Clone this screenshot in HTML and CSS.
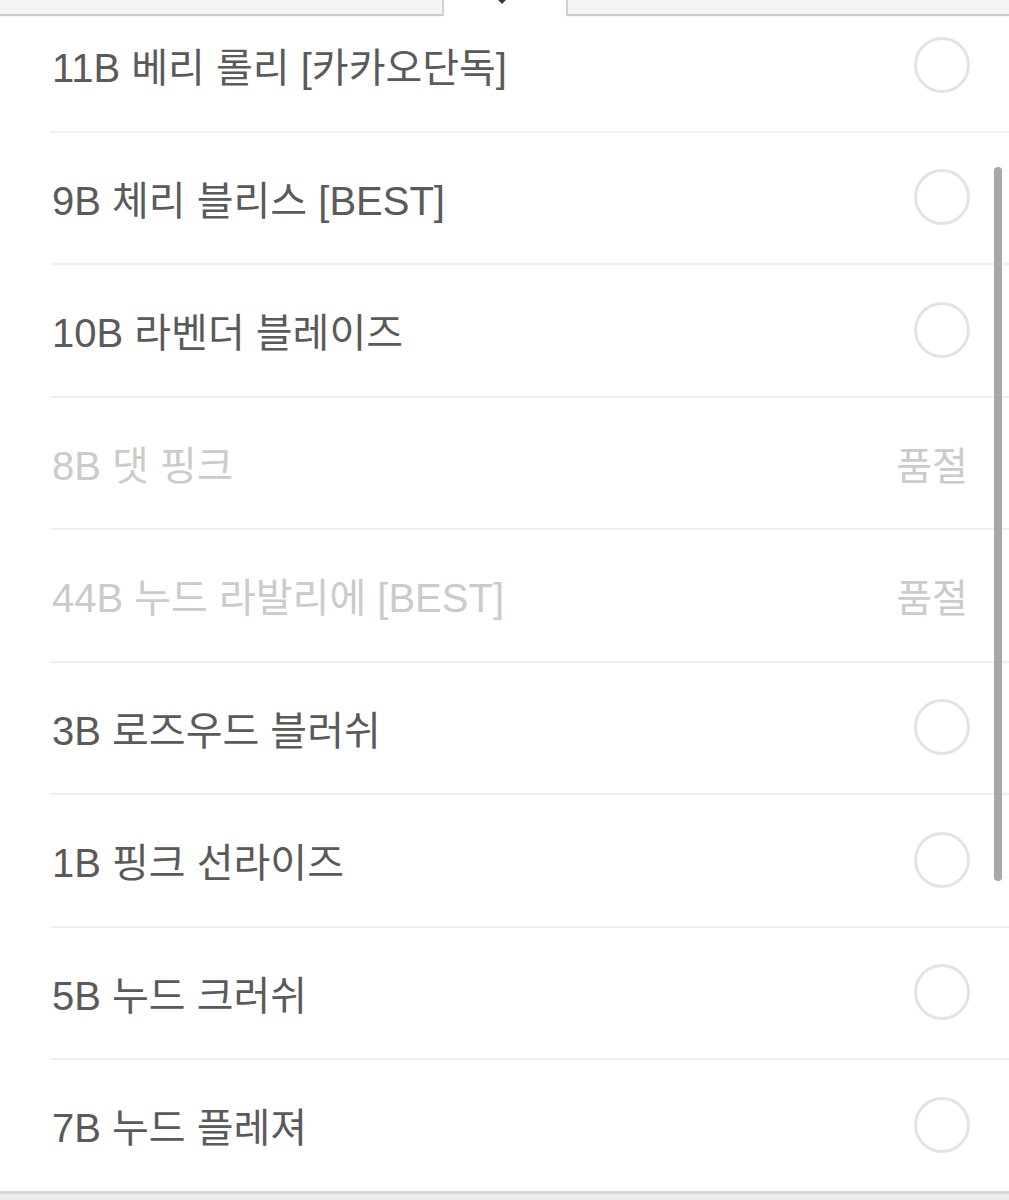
FILE: index.html
```html
<!DOCTYPE html>
<html lang="ko">
<head>
<meta charset="utf-8">
<link rel="stylesheet" href="styles.css">
</head>
<body>
<div class="page">
  <div class="tabs">
    <div class="tab-side tab-left"></div>
    <div class="tab-active"><span class="caret"></span></div>
    <div class="tab-side tab-right"></div>
  </div>
  <ul class="options">
    <li class="option"><span class="label">11B 베리 롤리 [카카오단독]</span><span class="radio"></span></li>
    <li class="option"><span class="label">9B 체리 블리스 [BEST]</span><span class="radio"></span></li>
    <li class="option"><span class="label">10B 라벤더 블레이즈</span><span class="radio"></span></li>
    <li class="option soldout"><span class="label">8B 댓 핑크</span><span class="status">품절</span></li>
    <li class="option soldout"><span class="label">44B 누드 라발리에 [BEST]</span><span class="status">품절</span></li>
    <li class="option"><span class="label">3B 로즈우드 블러쉬</span><span class="radio"></span></li>
    <li class="option"><span class="label">1B 핑크 선라이즈</span><span class="radio"></span></li>
    <li class="option"><span class="label">5B 누드 크러쉬</span><span class="radio"></span></li>
    <li class="option"><span class="label">7B 누드 플레져</span><span class="radio"></span></li>
  </ul>
  <div class="scrollbar"></div>
</div>
</body>
</html>
```

FILE: styles.css
```css
* { box-sizing: border-box; }
html, body {
  margin: 0;
  padding: 0;
  background: #ececec;
}
body {
  font-family: "Liberation Sans", "Noto Sans CJK KR", sans-serif;
  width: 1009px;
  height: 1200px;
  overflow: hidden;
}
.page {
  position: relative;
  width: 1009px;
}
.tabs {
  position: absolute;
  top: 0;
  left: 0;
  right: 0;
  height: 17px;
  display: flex;
  z-index: 2;
}
.tab-side {
  background: #f4f4f4;
  border-bottom: 2px solid #cbcbcb;
  height: 16px;
  box-shadow: 0 1px 2px rgba(0,0,0,0.04);
}
.tab-left {
  width: 444px;
  border-right: 2px solid #d2d2d2;
}
.tab-right {
  flex: 1;
  border-left: 2px solid #d2d2d2;
}
.tab-active {
  width: 122px;
  display: flex;
  justify-content: center;
  padding-right: 6px;
}
.caret {
  display: block;
  width: 0;
  height: 0;
  border-left: 4px solid transparent;
  border-right: 4px solid transparent;
  border-top: 4px solid #3a3a3a;
}
.options {
  list-style: none;
  margin: 0;
  padding: 0;
  background: #fff;
  border-bottom: 3px solid #d7d7d7;
}
.option {
  height: 132.5px;
  margin-left: 50px;
  padding: 0 39px 0 2px;
  display: flex;
  align-items: center;
  justify-content: space-between;
  border-bottom: 2px solid #efefef;
}
.option:last-child {
  border-bottom: none;
  height: 130.5px;
}
.label {
  font-size: 40px;
  color: #5a5a5a;
  white-space: nowrap;
}
.soldout .label {
  color: #cbcbcb;
}
.status {
  font-size: 39px;
  color: #cbcbcb;
  margin-right: 2px;
}
.radio {
  width: 56px;
  height: 56px;
  border: 3px solid #e3e3e3;
  border-radius: 50%;
  margin-top: -1px;
}
.scrollbar {
  position: absolute;
  left: 994px;
  top: 167px;
  width: 8px;
  height: 714px;
  background: #a8a8a8;
  border-radius: 4px;
}
```
